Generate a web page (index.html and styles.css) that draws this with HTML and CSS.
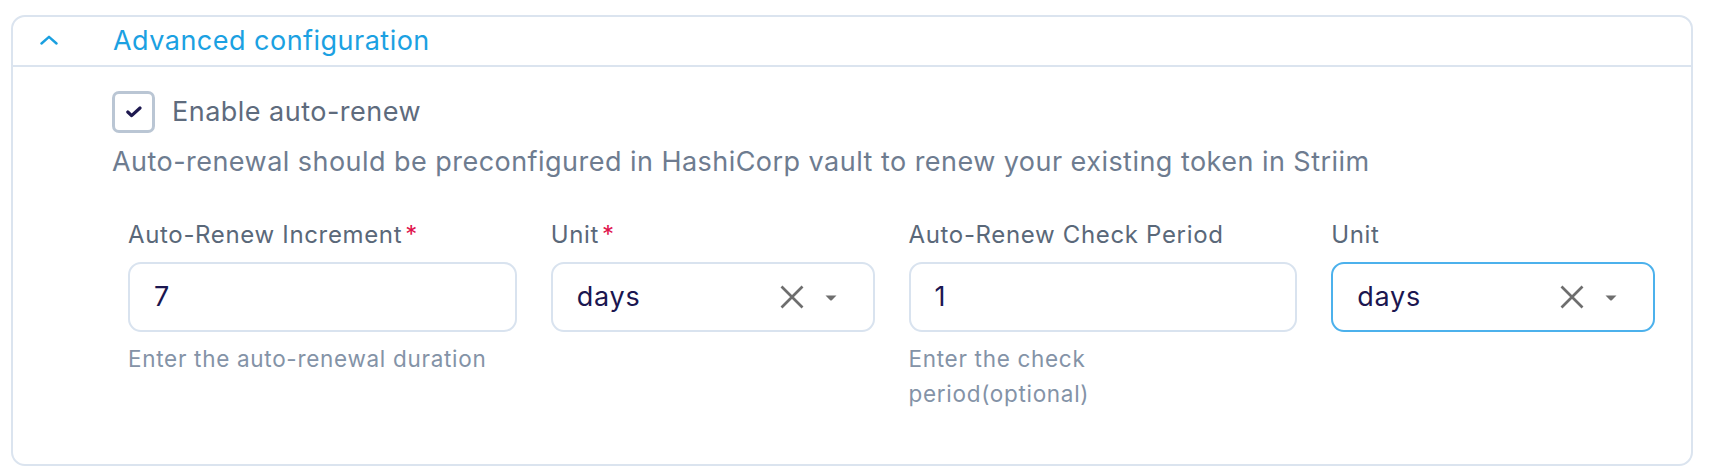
FILE: index.html
```html
<!DOCTYPE html>
<html lang="en">
<head>
<meta charset="utf-8">
<title>Advanced configuration</title>
<link rel="stylesheet" href="styles.css">
</head>
<body>
<div class="page">
  <section class="card">
    <header class="card-header">
      <svg class="chevron" width="18" height="10" viewBox="0 0 18 10" aria-hidden="true">
        <path d="M1.5 8.5 L9 1.8 L16.5 8.5" fill="none" stroke="#1aa0e0" stroke-width="2.4" stroke-linecap="round" stroke-linejoin="round"/>
      </svg>
      <h2 class="card-title">Advanced configuration</h2>
    </header>
    <div class="card-body">
      <label class="check-row">
        <span class="checkbox">
          <svg width="16" height="12" viewBox="0 0 16 12" aria-hidden="true">
            <path d="M1.8 6 L5.6 9.6 L14 2" fill="none" stroke="#1e1950" stroke-width="3.2" stroke-linecap="round" stroke-linejoin="round"/>
          </svg>
        </span>
        <span class="check-label">Enable auto-renew</span>
      </label>
      <p class="description">Auto-renewal should be preconfigured in HashiCorp vault to renew your existing token in Striim</p>

      <div class="fields">
        <div class="field">
          <div class="field-label">Auto-Renew Increment<span class="req">*</span></div>
          <div class="input"><span class="value">7</span></div>
          <div class="helper">Enter the auto-renewal duration</div>
        </div>
        <div class="field">
          <div class="field-label">Unit<span class="req">*</span></div>
          <div class="input select">
            <span class="value">days</span>
            <svg class="clear" width="24" height="24" viewBox="0 0 24 24" aria-hidden="true">
              <path d="M1.5 1.5 L22.5 22.5 M22.5 1.5 L1.5 22.5" stroke="#6e6e6e" stroke-width="2.7" fill="none"/>
            </svg>
            <svg class="caret" width="12" height="6" viewBox="0 0 12 6" aria-hidden="true">
              <path d="M0.5 0.5 L11.5 0.5 L6.8 5.2 Q6 6 5.2 5.2 Z" fill="#6e6e6e"/>
            </svg>
          </div>
        </div>
        <div class="field">
          <div class="field-label">Auto-Renew Check Period</div>
          <div class="input"><span class="value">1</span></div>
          <div class="helper">Enter the check period(optional)</div>
        </div>
        <div class="field">
          <div class="field-label">Unit</div>
          <div class="input select focused">
            <span class="value">days</span>
            <svg class="clear" width="24" height="24" viewBox="0 0 24 24" aria-hidden="true">
              <path d="M1.5 1.5 L22.5 22.5 M22.5 1.5 L1.5 22.5" stroke="#6e6e6e" stroke-width="2.7" fill="none"/>
            </svg>
            <svg class="caret" width="12" height="6" viewBox="0 0 12 6" aria-hidden="true">
              <path d="M0.5 0.5 L11.5 0.5 L6.8 5.2 Q6 6 5.2 5.2 Z" fill="#6e6e6e"/>
            </svg>
          </div>
        </div>
      </div>
    </div>
  </section>
</div>
</body>
</html>
```
FILE: styles.css
```css
* {
  box-sizing: border-box;
}

html, body {
  margin: 0;
  padding: 0;
  background: #ffffff;
}

body {
  font-family: Inter, "Noto Sans", "Liberation Sans", sans-serif;
  color: #5c6a7c;
}

.page {
  padding: 15px 23px 10px 11px;
}

.card {
  border: 2px solid #dbe4ef;
  border-radius: 14px;
  background: #ffffff;
}

.card-header {
  display: flex;
  align-items: center;
  height: 50px;
  padding-left: 27px;
  border-bottom: 2px solid #dbe4ef;
}

.chevron {
  flex: none;
  margin-right: 55px;
  margin-top: -2px;
}

.card-title {
  margin: 0;
  font-size: 27px;
  font-weight: 400;
  line-height: 38px;
  letter-spacing: 0.48px;
  color: #1ba1e2;
}

.card-body {
  padding: 24px 20px 53px 99px;
}

.check-row {
  display: flex;
  align-items: center;
  gap: 17px;
  height: 42px;
}

.checkbox {
  flex: none;
  width: 43px;
  height: 42px;
  border: 3px solid #bac6d4;
  border-radius: 7px;
  display: flex;
  align-items: center;
  justify-content: center;
  background: #ffffff;
}

.check-label {
  font-size: 27px;
  line-height: 38px;
  letter-spacing: 0.48px;
  color: #5e6b7d;
}

.description {
  margin: 10px 0 0 0;
  font-size: 27px;
  line-height: 38px;
  letter-spacing: 0.46px;
  color: #6e7c90;
  white-space: nowrap;
}

.fields {
  display: grid;
  grid-template-columns: 6fr 5fr 6fr 5fr;
  column-gap: 34px;
  margin-top: 37px;
  padding: 0 16px;
}

.field {
  min-width: 0;
}

.field-label {
  font-size: 24px;
  line-height: 34px;
  letter-spacing: 0.66px;
  color: #5a6879;
}

.req {
  color: #e0124c;
  margin-left: 3px;
}

.input {
  margin-top: 10px;
  height: 70px;
  border: 2px solid #d9e3ef;
  border-radius: 13px;
  display: flex;
  align-items: center;
  padding: 0 36px 0 24px;
  background: #ffffff;
}

.input.focused {
  border-color: #4cb1ec;
}

.value {
  flex: 1;
  font-size: 27px;
  line-height: 38px;
  letter-spacing: 0.8px;
  color: #1b1650;
}

.clear {
  flex: none;
  margin-right: 21px;
}

.caret {
  flex: none;
  margin-top: 1px;
}

.helper {
  margin-top: 9px;
  max-width: 359px;
  font-size: 22.5px;
  line-height: 35px;
  letter-spacing: 0.7px;
  color: #8493a7;
}
```
